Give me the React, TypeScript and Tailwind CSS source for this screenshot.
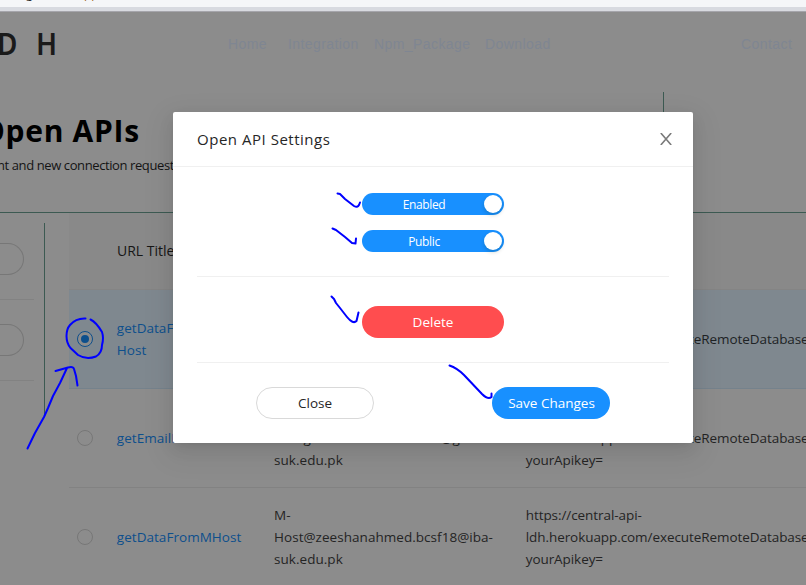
import React from 'react';

const nav = [
  { label: 'Home', width: 'w-[60px]' },
  { label: 'Integration', width: 'w-[86px]' },
  { label: 'Npm_Package', width: 'w-[111px]' },
  { label: 'Download', width: 'w-[256px]' },
  { label: 'Contact', width: 'w-[60px]' },
];

const url = 'ldh.herokuapp.com/executeRemoteDatabase?yourUrl=';

const rows = [
  { selected: true, title: ['getDataFrom', 'Host'], host: ['M-', 'Host@zeeshanahmed.bcsf18@iba-', 'suk.edu.pk'] },
  { selected: false, title: ['getEmailList'], host: ['M-', 'Hostgzeeshanahmed.bcsfi@giba-', 'suk.edu.pk'] },
  { selected: false, title: ['getDataFromMHost'], host: ['M-', 'Host@zeeshanahmed.bcsf18@iba-', 'suk.edu.pk'] },
];

function Radio({ selected }: { selected: boolean }) {
  return (
    <span
      className={
        selected
          ? 'flex size-4 items-center justify-center rounded-full border border-[#0d4f8c] bg-[#8c8c8c]'
          : 'flex size-4 items-center justify-center rounded-full border border-[#777777]'
      }
    >
      {selected && <span className="size-2 rounded-full bg-[#0d4f8c]" />}
    </span>
  );
}

function Switch({ label }: { label: string }) {
  return (
    <button className="flex h-[22px] w-[142px] items-center rounded-full bg-[#1890ff] pr-[2px] text-white">
      <span className="flex-1 pl-[2px] pt-[2px] text-center text-[12px] font-medium leading-[22px] tracking-[-0.35px]">{label}</span>
      <span className="size-[18px] rounded-full bg-white shadow-[0_2px_4px_rgba(0,35,11,0.2)]" />
    </button>
  );
}

function Sidebar() {
  return (
    <div className="flex w-[45px] shrink-0 pt-[10px]">
      <div className="h-[192px] w-[44px] pt-5">
        <div className="h-8 w-6 rounded-r-full border border-l-0 border-[#777777]" />
        <div className="mt-6 h-px w-[34px] bg-[#828282]" />
        <div className="mt-6 h-8 w-6 rounded-r-full border border-l-0 border-[#777777]" />
        <div className="mt-6 h-px w-[34px] bg-[#828282]" />
      </div>
      <div className="h-[192px] w-px bg-[#3c5a52]" />
    </div>
  );
}

function ApiTable() {
  return (
    <div className="ml-6 w-[800px] shrink-0">
      <div className="flex h-[77px] items-center border-b border-[#848484] bg-[#898989] pb-[2px] pl-12 text-[14px] font-medium text-[#161616]">
        URL Title
      </div>
      {rows.map((row, i) => (
        <div
          key={i}
          className={
            row.selected
              ? 'flex h-[99px] items-center border-b border-[#75828c] bg-[#7f888f] text-[13.5px] leading-[22px] text-[#202325]'
              : 'flex h-[99px] items-center border-b border-[#828282] text-[13.5px] leading-[22px] text-[#242424]'
          }
        >
          <div className="w-12 pl-2">
            <Radio selected={row.selected} />
          </div>
          <div className="w-[158px] tracking-[0.04px] text-[#0d4f8c]">
            {row.title.map((line) => (
              <div key={line}>{line}</div>
            ))}
          </div>
          <div className="w-[253px] whitespace-nowrap tracking-[0.04px]">
            {row.host.map((line) => (
              <div key={line}>{line}</div>
            ))}
          </div>
          <div className="-ml-[2px] whitespace-nowrap pl-[2px] tracking-[-0.07px]">
            <div>https://central-api-</div>
            <div>{url}</div>
            <div>yourApikey=</div>
          </div>
        </div>
      ))}
    </div>
  );
}

function SettingsModal() {
  return (
    <div className="absolute left-[173px] top-[112px] h-[331px] w-[520px] rounded-[2px] bg-white text-[#262626] shadow-[0_3px_6px_-4px_rgba(0,0,0,0.12),0_6px_16px_0_rgba(0,0,0,0.08),0_9px_28px_8px_rgba(0,0,0,0.05)]">
      <div className="flex h-[55px] items-center justify-between border-b border-[#f0f0f0] pl-6 pr-[21px]">
        <h2 className="text-[15px] font-medium tracking-[0.52px]">Open API Settings</h2>
        <svg width="12" height="12" viewBox="0 0 12 12" fill="none" stroke="#7a7a7a" strokeWidth="1.6">
          <path d="M0.8 0 L11.2 12 M11.2 0 L0.8 12" />
        </svg>
      </div>
      <div className="flex flex-col items-center px-6 pt-[26px]">
        <Switch label="Enabled" />
        <div className="h-[15px]" />
        <Switch label="Public" />
        <div className="mt-6 h-px w-full bg-[#f0f0f0]" />
        <button className="mt-[29px] h-8 w-[142px] rounded-full bg-[#ff4d4f] pb-px text-[13.5px] leading-5 text-white">
          Delete
        </button>
        <div className="mt-6 h-px w-full bg-[#f0f0f0]" />
        <div className="mt-6 flex w-full justify-between px-[59px] text-[13.5px] leading-5">
          <button className="h-8 w-[118px] rounded-full border border-[#d9d9d9] pb-px">Close</button>
          <button className="h-8 w-[118px] rounded-full bg-[#1890ff] pb-px pl-px text-white">Save Changes</button>
        </div>
      </div>
    </div>
  );
}

function PenMarks() {
  return (
    <svg
      className="pointer-events-none absolute left-0 top-0"
      width="806"
      height="585"
      viewBox="0 0 806 585"
      fill="none"
      stroke="#0000ff"
      strokeWidth="2"
      strokeLinecap="round"
      strokeLinejoin="round"
    >
      <path d="M337.500 193.500 L340 194 L345 199 L354 206 Q357.500 208 359 205 L360 202.500" />
      <path d="M332.500 228.500 L336 230 L345 237 L352 243 L355.500 243.500 L356 238.500" />
      <path d="M331.500 296.500 L334 299 L336 303 L340 308 L347 317 Q353 324.500 356.500 321 L358.500 312.500" />
      <path d="M449.500 365.500 Q457 368 464 375 L482 394 Q488 400 491.500 397 L491.500 393.500" />
      <path d="M85.500 318.500 Q76 318 70 325 Q66.500 329 66.500 336 Q66.500 343 70.500 348 L78 355 Q86 360 96 356.500 Q102 353 102 345 Q104 338 102 332 Q96 322 90.500 319.500" />
      <path d="M27.500 448.500 L35 433 L44 417 L48 408 L53 396 L60 383 L67 368 M55.500 371 L68 367.500 Q73 366 74 369 L76 376 L77.500 385.500" />
    </svg>
  );
}

export default function App() {
  return (
    <div className="relative h-[585px] w-[806px] overflow-hidden bg-[#8c8c8c] font-['Open_Sans','Noto_Sans',sans-serif]">
      <div className="h-[7px] overflow-hidden bg-[#f5f6f8]">
        <div className="-mt-[14px] flex text-[12px] leading-[16px] text-[#222222]">
          <span className="ml-[26px] w-[58px]">g</span>
          <span className="text-[#a0651c]">pp</span>
        </div>
      </div>
      <div className="h-[5px] border-b border-[#a5a5ab] bg-[#d8dae0]" />

      <header className="flex h-[80px] pt-[11px]">
        <div className="w-[228px] font-['Noto_Sans'] text-[31px] font-semibold leading-[40px] text-[#1a1a1a]">
          <span className="-ml-[3px] inline-block w-[39px] origin-left scale-x-90">D</span>
          <span className="inline-block origin-left scale-x-90">H</span>
        </div>
        <nav className="flex pt-[11px] font-['Liberation_Sans',Arial,sans-serif] text-[14px] leading-5 tracking-[0.42px] text-[#7f8692]">
          {nav.map((item) => (
            <span key={item.label} className={item.width}>
              {item.label}
            </span>
          ))}
        </nav>
      </header>

      <section className="flex h-[121px] border-b border-[#3c5a52]">
        <div className="w-[663px] whitespace-nowrap">
          <h1 className="-ml-[19px] mt-[19px] text-[30px] font-bold leading-[40px] tracking-[0.7px] text-black">Open APIs</h1>
          <p className="-ml-[3px] mt-[3px] text-[13px] leading-[22px] tracking-[-0.4px] text-[#141414]">
            nt and new connection requests
          </p>
        </div>
        <div className="w-px bg-[#3c5a52]" />
      </section>

      <main className="flex">
        <Sidebar />
        <ApiTable />
      </main>

      <SettingsModal />
      <PenMarks />
    </div>
  );
}
